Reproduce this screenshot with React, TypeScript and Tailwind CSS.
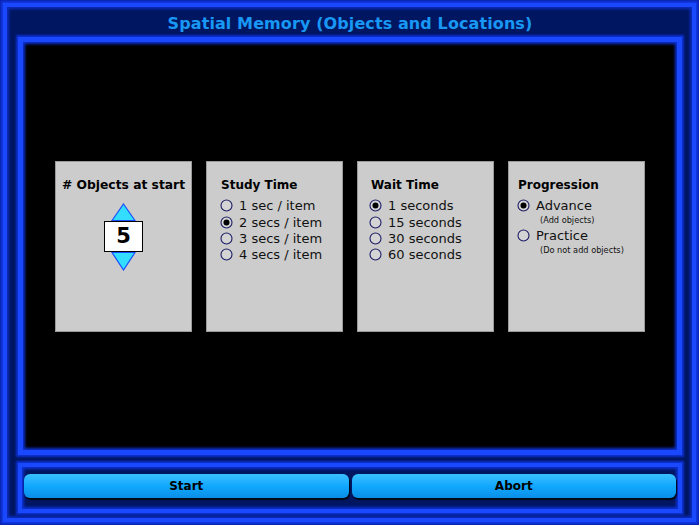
import React from "react";

const font = { fontFamily: '"DejaVu Sans", Verdana, sans-serif' };

function Radio({ checked }: { checked?: boolean }) {
  return (
    <svg width="13" height="13" viewBox="0 0 13 13" className="shrink-0">
      <circle cx="6.5" cy="6.5" r="5.5" fill="#d4d4d4" stroke="#1c1c66" strokeWidth="1.1" />
      {checked && <circle cx="6.5" cy="6.5" r="3" fill="#000" />}
    </svg>
  );
}

function Option({ label, checked }: { label: string; checked?: boolean }) {
  return (
    <div className="flex items-center gap-[6px] h-[16.4px] ml-[-1px] text-[13px] leading-none text-[#111]">
      <Radio checked={checked} />
      <span>{label}</span>
    </div>
  );
}

function Card({ children, className = "" }: { children: React.ReactNode; className?: string }) {
  return (
    <div className={`w-[137px] h-[171px] bg-[#cccccc] border border-[#9a9a9a] ${className}`}>{children}</div>
  );
}

export default function App() {
  return (
    <div className="w-[699px] h-[525px] bg-[#0a1fa8] p-[3px]" style={font}>
      <div className="w-full h-full bg-[#001660] border-[4px] border-[#1a48ff] shadow-[0_0_2px_2px_#1038e0,inset_0_0_3px_2px_#0c2cc0] pl-[11px] pr-[10px] flex flex-col">
        <div className="h-[30px] pt-[3px] flex items-center justify-center text-[16px] font-bold text-[#1898f4] tracking-[0.1px]">
          Spatial Memory (Objects and Locations)
        </div>
        <div className="h-[418px] bg-black border-[5px] border-[#1a48ff] shadow-[0_0_2px_2px_#0c30d0,inset_0_0_3px_2px_#0c30d0] flex items-center justify-center gap-[14px]">
          <Card className="flex flex-col items-center pt-[17px]">
            <div className="text-[12.3px] font-bold leading-none text-black">&#35; Objects at start</div>
            <div className="mt-[12px] flex flex-col items-center">
              <svg width="25" height="18" viewBox="0 0 25 18">
                <polygon points="12.5,1 24,17.5 1,17.5" fill="#33ddff" stroke="#1a4cff" strokeWidth="1.2" />
              </svg>
              <div className="w-[39px] h-[31px] bg-white border border-black flex items-center justify-center text-[21px] font-bold leading-none text-black">
                5
              </div>
              <svg width="25" height="19" viewBox="0 0 25 19">
                <polygon points="1,0.5 24,0.5 12.5,18" fill="#33ddff" stroke="#1a4cff" strokeWidth="1.2" />
              </svg>
            </div>
          </Card>
          <Card className="pl-[14px] pt-[17px]">
            <div className="text-[12px] font-bold leading-none text-black mb-[7px]">Study Time</div>
            <Option label="1 sec / item" />
            <Option label="2 secs / item" checked />
            <Option label="3 secs / item" />
            <Option label="4 secs / item" />
          </Card>
          <Card className="pl-[12px] pt-[17px]">
            <div className="text-[12px] font-bold leading-none text-black mb-[7px] pl-[1px]">Wait Time</div>
            <Option label="1 seconds" checked />
            <Option label="15 seconds" />
            <Option label="30 seconds" />
            <Option label="60 seconds" />
          </Card>
          <Card className="pl-[9px] pt-[17px]">
            <div className="text-[12px] font-bold leading-none text-black mb-[7px]">Progression</div>
            <Option label="Advance" checked />
            <div className="text-[8.2px] leading-none text-[#111] pl-[22px] mt-[2px] mb-[3px]">(Add objects)</div>
            <Option label="Practice" />
            <div className="text-[8.2px] leading-none text-[#111] pl-[22px] mt-[3px]">(Do not add objects)</div>
          </Card>
        </div>
        <div className="mt-[8px] h-[50px] border-[4px] border-[#1a48ff] shadow-[0_0_2px_2px_#0c30d0,inset_0_0_3px_2px_#0c30d0] px-[2px] py-[7px] flex gap-[3px]">
          <button className="flex-1 h-[24px] rounded-[6px] bg-gradient-to-b from-[#38c0ff] via-[#11a8ff] to-[#0a8ee8] shadow-[1px_2px_1px_#000814] text-[12px] font-bold text-black leading-none">
            Start
          </button>
          <button className="flex-1 h-[24px] rounded-[6px] bg-gradient-to-b from-[#38c0ff] via-[#11a8ff] to-[#0a8ee8] shadow-[1px_2px_1px_#000814] text-[12px] font-bold text-black leading-none">
            Abort
          </button>
        </div>
      </div>
    </div>
  );
}
